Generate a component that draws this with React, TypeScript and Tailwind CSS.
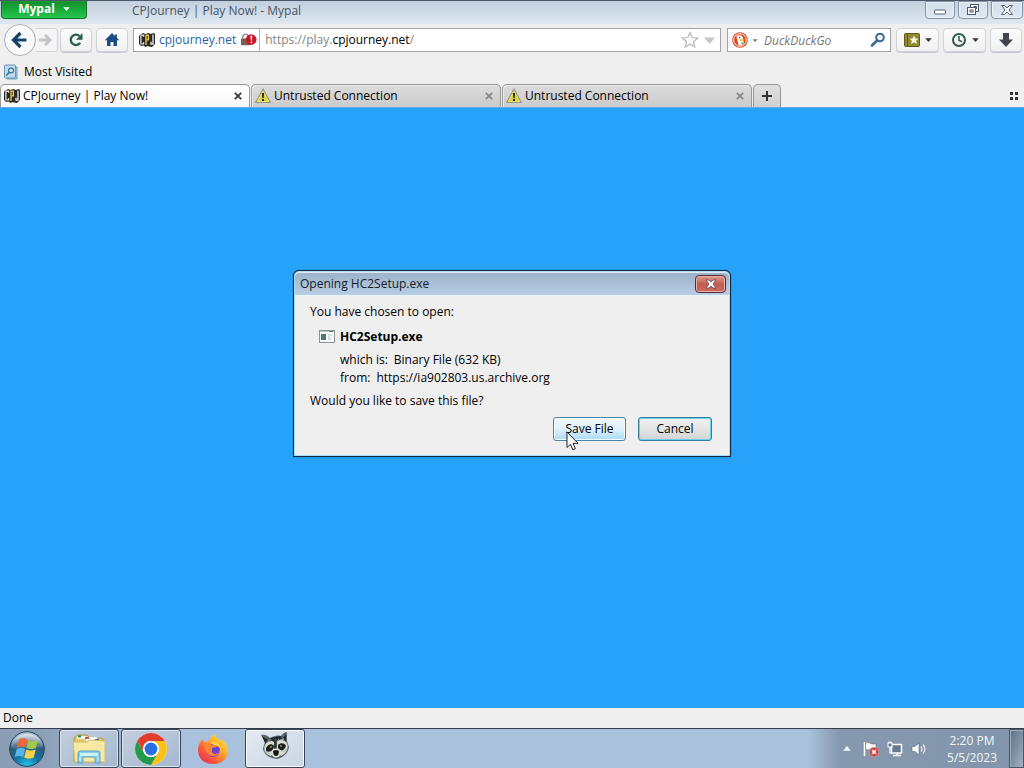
import React, { useState } from "react";

const toolButton =
  "flex h-6 items-center justify-center rounded-sm border border-[#cfd3d8] bg-gradient-to-b from-[#fbfbfb] to-[#f1f1f1] shadow-[0_1px_0_#c4c8cd]";
const windowButton =
  "flex h-full items-center justify-center rounded-b-sm border border-[#8593a6] bg-gradient-to-b from-[#d4e0ec] to-[#dde7f0] shadow-[inset_0_0_0_1px_#e9f0f6]";

function Caret({ className }: { className: string }) {
  return (
    <svg className={className} viewBox="0 0 8 5" aria-hidden="true">
      <path d="M0 .3h8L4 5z" fill="currentColor" />
    </svg>
  );
}

function CpjIcon() {
  return (
    <svg className="h-4 w-4 shrink-0" viewBox="0 0 16 16" aria-hidden="true">
      <path d="M1 2.500 4.500 1l1.500 1 4-1 1.500 1L15 1l1 1v10l-3 3-3-.5L8.500 14l-2 1-2-1.500L2 14 0 12V4z" fill="#2a2925" />
      <path d="M4.600 4.800V3.200H1.900v8.800h2.700v-1.700" fill="none" stroke="#eee" strokeWidth="1.200" />
      <path d="M7 13V3.200h2.400v4.600H7" fill="none" stroke="#f6d04b" strokeWidth="1.300" />
      <path d="M14 2.500v9.700h-2V9.800" fill="none" stroke="#f1f1f1" strokeWidth="1.300" />
    </svg>
  );
}

function WarningIcon() {
  return (
    <svg className="h-4 w-4 shrink-0" viewBox="0 0 16 16" aria-hidden="true">
      <path d="M8 1 15.300 14.500H.7z" fill="#ddd43c" stroke="#96957d" strokeWidth="1.200" strokeLinejoin="round" />
      <path d="M8 3 13.700 13.500H2.300z" fill="none" stroke="#f4efa0" strokeWidth=".6" />
      <path d="M6.900 5h2.200L8.700 10H7.300zM7 11h2v2H7z" fill="#262619" />
    </svg>
  );
}

function SmallCross({ className }: { className: string }) {
  return (
    <svg className={className} viewBox="0 0 8 8" aria-hidden="true">
      <path d="m.8.8 6.400 6.400M7.200.8.8 7.200" stroke="currentColor" strokeWidth="1.700" />
    </svg>
  );
}

function Tab({ title, active }: { title: string; active?: boolean }) {
  return (
    <div
      className={
        active
          ? "flex w-[250px] min-w-0 items-center rounded-t-[5px] border border-b-0 border-[#9a9a9a] bg-gradient-to-b from-white to-[#f8f8f8] pr-[7px] pl-[3px]"
          : "flex w-[250px] min-w-0 items-center rounded-t-[5px] border border-b-0 border-[#979797] bg-gradient-to-b from-[#dcdcdc] to-[#cbcbcb] pr-[7px] pl-[3px] shadow-[inset_1px_1px_0_#ececec]"
      }
    >
      <button role="tab" aria-selected={!!active} className="flex min-w-0 flex-1 items-center gap-[3px] text-left">
        {active ? <CpjIcon /> : <WarningIcon />}
        <span className="truncate">{title}</span>
      </button>
      <button aria-label={"Close " + title}>
        <SmallCross className={active ? "h-2 w-2 text-[#333]" : "h-2 w-2 text-[#878787]"} />
      </button>
    </div>
  );
}

function TitleBar() {
  return (
    <header className="flex h-6 items-start border-t border-[#4b5666] bg-gradient-to-b from-[#c2cfdd] to-[#dfe8f0] pr-px pl-px">
      <button className="flex h-[18px] w-[86px] items-center justify-center gap-2 rounded-b border border-t-0 border-[#0d6a20] bg-gradient-to-b from-[#158c2c] via-[#17ac39] to-[#25c751] pb-[2px] font-bold text-white shadow-[inset_0_0_1px_#8df0a4]">
        Mypal
        <Caret className="h-1 w-[7px]" />
      </button>
      <h1 className="ml-[45px] flex-1 leading-5 text-[#465568]">CPJourney | Play Now! - Mypal</h1>
      <div className="flex h-[18px] gap-[3px]">
        <button aria-label="Minimize" className={windowButton + " w-[30px]"}>
          <svg className="h-4 w-4" viewBox="0 0 16 16"><rect x="2.500" y="8" width="11" height="4" rx="1" fill="#fff" stroke="#56627a" /></svg>
        </button>
        <button aria-label="Restore" className={windowButton + " w-[30px]"}>
          <svg className="h-4 w-4" viewBox="0 0 16 16" fill="#fff" stroke="#4f5b72">
            <rect x="5.500" y="2.500" width="8" height="7" /><rect x="2.500" y="5.500" width="8" height="7" /><rect x="5" y="8" width="3" height="2" />
            <path d="M8.500 4.500h3V7" fill="none" />
          </svg>
        </button>
        <button aria-label="Close window" className={windowButton + " w-8"}>
          <svg className="h-4 w-4" viewBox="0 0 16 16"><path d="M2.500 3.500h3L8 6l2.500-2.500h3L10 8l3.500 4.500h-3L8 10l-2.500 2.500h-3L6 8z" fill="#fff" stroke="#56627a" /></svg>
        </button>
      </div>
    </header>
  );
}

function Toolbar() {
  const [address, setAddress] = useState("https://play.cpjourney.net/");
  return (
    <nav className="flex h-8 items-center pr-[2px] pl-1">
      <button aria-label="Back" className="flex h-8 w-8 shrink-0 items-center justify-center rounded-full border border-[#a9adb2] bg-[#fafafa]">
        <svg className="h-5 w-5" viewBox="0 0 20 20"><path d="M10.500 3 3.500 10l7 7M4 10h12.500" fill="none" stroke="#17446f" strokeWidth="3.200" /></svg>
      </button>
      <button aria-label="Forward" disabled className="flex h-6 w-[22px] items-center justify-center rounded-r-sm border border-l-0 border-[#cfd3d8] bg-[#f5f5f5] pr-1">
        <svg className="h-4 w-4" viewBox="0 0 16 16"><path d="m8 3 5 5-5 5M2 8h10" fill="none" stroke="#bfc5ca" strokeWidth="3" /></svg>
      </button>
      <button aria-label="Reload" className={toolButton + " ml-[2px] w-8"}>
        <svg className="h-4 w-4" viewBox="0 0 16 16"><path d="M12.200 10.800A5.200 5.200 0 1 1 11.500 4" fill="none" stroke="#285f4a" strokeWidth="2.300" /><path d="M14.500 1v6.700H8z" fill="#285f4a" /></svg>
      </button>
      <button aria-label="Home" className={toolButton + " ml-1 w-8"}>
        <svg className="h-4 w-4" viewBox="0 0 16 16"><path d="M8 1 .8 8.200H3V14h3.500v-4h3v4H13V8.200h2.200L13 6V2.500h-2V4z" fill="#1e4d86" /></svg>
      </button>
      <div className="ml-[5px] flex h-6 min-w-0 flex-1 items-center border border-[#a3a3a3] bg-white">
        <button className="flex h-full items-center gap-1 border-r border-[#b9b9b9] pr-[2px] pl-[5px] text-[#1f5fa8]">
          <CpjIcon />
          cpjourney.net
          <svg className="h-4 w-[17px]" viewBox="0 0 18 16" aria-hidden="true">
            <path d="M3 7V5a3 3 0 0 1 6 0v2" fill="none" stroke="#999" strokeWidth="1.600" /><rect x="1" y="6.500" width="10" height="7" rx="1" fill="#75605a" />
            <circle cx="11.800" cy="7.500" r="5.700" fill="#c9172a" /><path d="M11 3.500h2L12.500 8.500h-1z" fill="#fff" /><circle cx="12" cy="10.500" r="1" fill="#fff" />
          </svg>
        </button>
        <div className="relative h-full min-w-0 flex-1">
          <input aria-label="Address" value={address} onChange={(e) => setAddress(e.target.value)} className="h-full w-full px-[5px] text-transparent caret-black outline-none" />
          <div aria-hidden="true" className="pointer-events-none absolute inset-0 flex items-center overflow-hidden px-[5px] whitespace-pre">
            {address === "https://play.cpjourney.net/" ? (
              <><span className="text-[#858585]">https://play.</span><span>cpjourney.net</span><span className="text-[#858585]">/</span></>
            ) : address}
          </div>
        </div>
        <button aria-label="Bookmark this page">
          <svg className="h-[18px] w-[18px]" viewBox="0 0 18 18"><path d="m9 1.500 2.200 5 5.500.5-4.200 3.700 1.300 5.400L9 13.200l-4.800 2.900 1.300-5.400L1.300 7l5.500-.5z" fill="#fcfcfc" stroke="#b8b8b8" strokeWidth="1.200" /></svg>
        </button>
        <button aria-label="Show history" className="mr-[5px] ml-[5px] text-[#c6c6c6]"><Caret className="h-[7px] w-[11px]" /></button>
      </div>
      <form className="ml-[6px] flex h-6 w-[164px] items-center border border-[#a3a3a3] bg-white" onSubmit={(e) => e.preventDefault()}>
        <button type="button" aria-label="Search engine" className="flex items-center gap-1 pl-[4px] text-[#737373]">
          <svg className="h-4 w-4" viewBox="0 0 16 16"><circle cx="8" cy="8" r="7.800" fill="#d8431b" /><circle cx="8" cy="8" r="6.300" fill="none" stroke="#fff" /><path d="M4.500 4C8 2 11.500 4 11 7l1 4.500L9 13.500 6.500 13 5 7z" fill="#fff" /><path d="M8 7.500c2.500-.8 4-.6 4.500.2-.6 1.300-2.500 1.600-4.500 1.300z" fill="#f9c426" /><path d="m8.500 11 3-1v2.500z" fill="#65a942" /><circle cx="7.600" cy="5.500" r=".8" fill="#444" /></svg>
          <Caret className="h-[3px] w-[6px]" />
        </button>
        <input aria-label="Search" placeholder="DuckDuckGo" className="ml-[6px] h-full min-w-0 flex-1 italic outline-none placeholder:text-[#777]" />
        <button aria-label="Search the web" className="pr-1">
          <svg className="h-4 w-4" viewBox="0 0 16 16"><circle cx="10" cy="5.500" r="3.800" fill="#f1f7fb" stroke="#376a99" strokeWidth="2" /><path d="m7 8.500-5 5" stroke="#376a99" strokeWidth="2.600" strokeLinecap="round" /></svg>
        </button>
      </form>
      <button aria-label="Bookmarks" className={toolButton + " ml-[5px] w-[43px] gap-[5px]"}>
        <svg className="h-4 w-4" viewBox="0 0 16 16"><rect x=".5" y="1.500" width="15" height="13" rx="1" fill="#8d8b35" stroke="#5e5b19" /><path d="M3.500 1v14" stroke="#5e5b19" /><path d="m10 3.500 1.300 3 3.200.3-2.400 2 .8 3.200-2.900-1.700L7.100 12l.8-3.200-2.400-2 3.200-.3z" fill="#fff8df" /></svg>
        <Caret className="h-1 w-[7px] text-[#333]" />
      </button>
      <button aria-label="History" className={toolButton + " ml-1 w-[43px] gap-[5px]"}>
        <svg className="h-4 w-4" viewBox="0 0 16 16" fill="none" stroke="#315d50"><circle cx="8" cy="8" r="6" strokeWidth="2" /><path d="M8 4v4.500l3 1" strokeWidth="1.500" /></svg>
        <Caret className="h-1 w-[7px] text-[#333]" />
      </button>
      <button aria-label="Downloads" className={toolButton + " ml-1 w-8"}>
        <svg className="h-4 w-4" viewBox="0 0 16 16"><path d="M5 1h6v6.500h4L8 15 1 7.500h4z" fill="#41454c" /></svg>
      </button>
    </nav>
  );
}

function Dialog() {
  return (
    <section role="dialog" aria-labelledby="dialog-title" className="flex h-[187px] w-[438px] flex-col rounded-t-[6px] border border-[#10283b] bg-[#a9def7] p-px shadow-[0_0_1px_#10283b]">
      <div className="flex h-[23px] shrink-0 items-center rounded-t-[5px] border-t border-[#dceaf6] bg-gradient-to-b from-[#9db3ca] to-[#b9cee5] pr-[3px] pl-[5px]">
        <h2 id="dialog-title" className="flex-1 text-[#14202c]">Opening HC2Setup.exe</h2>
        <button aria-label="Close" className="flex h-[18px] w-[31px] items-center justify-center rounded-sm border border-[#582b32] bg-gradient-to-b from-[#dc9c91] via-[#c45c4f] via-50% to-[#c86c5c] shadow-[inset_0_0_0_1px_#e7b5ad]">
          <svg className="h-3 w-3" viewBox="0 0 12 12"><path d="M1 2h3l2 2 2-2h3L8 6l3 4H8L6 8l-2 2H1l3-4z" fill="#fff" stroke="#5c4146" strokeWidth=".8" /></svg>
        </button>
      </div>
      <div className="flex flex-1 flex-col border border-[#e4f5fc] bg-[#efefef] pt-[7px] pr-4 pl-[14px] leading-[18px]">
        <p>You have chosen to open:</p>
        <div className="mt-[7px] flex items-center gap-[5px] pl-[9px] font-bold">
          <svg className="h-4 w-4" viewBox="0 0 16 16" aria-hidden="true"><rect x=".5" y="1.500" width="15" height="12" fill="#f8faf9" stroke="#899294" /><path d="M1 2.500h14" stroke="#b4c8cf" /><rect x="2" y="5" width="5" height="6" fill="#47796c" /><path d="M9 6h4M9 8h2M9 10h3" stroke="#b8c2c1" /><path d="M10 2.500h4" stroke="#5d7880" /></svg>
          HC2Setup.exe
        </div>
        <dl className="mt-[5px] pl-[30px]">
          <div className="flex gap-[6px]"><dt>which is:</dt><dd>Binary File (632 KB)</dd></div>
          <div className="flex gap-[6px]"><dt>from:</dt><dd>https://ia902803.us.archive.org</dd></div>
        </dl>
        <p className="mt-[5px]">Would you like to save this file?</p>
        <div className="mt-[7px] flex justify-end gap-3">
          <div className="relative">
            <button className="h-6 w-[73px] rounded-[3px] border border-[#4d83a9] bg-gradient-to-b from-[#eef8fd] via-[#dcf1fc] via-50% to-[#abdbf4] leading-5 shadow-[inset_0_0_0_1px_#f0faff]">Save File</button>
            <svg className="pointer-events-none absolute top-[14px] left-[13px] h-5 w-[13px]" viewBox="0 0 13 20" aria-hidden="true"><path d="M1 1v15.500l3.500-3.200 2.300 5.500 2.500-1.100L7 12.300h5z" fill="#fff" stroke="#20252c" strokeLinejoin="round" /></svg>
          </div>
          <button className="h-6 w-[74px] rounded-[3px] border border-[#347f9c] bg-gradient-to-b from-[#f3f3f3] via-[#e5e5e5] via-50% to-[#d1d3d4] leading-5 shadow-[inset_0_0_0_1px_#6cd0e8]">Cancel</button>
        </div>
      </div>
    </section>
  );
}

function StartOrb() {
  return (
    <svg className="h-9 w-9" viewBox="0 0 36 36" aria-hidden="true">
      <defs>
        <radialGradient id="orb" cx=".5" cy="1" r=".95"><stop stopColor="#23c9ec" /><stop offset=".4" stopColor="#16709f" /><stop offset=".75" stopColor="#315775" /><stop offset="1" stopColor="#aac1d1" /></radialGradient>
        <linearGradient id="gloss" x2="0" y2="1"><stop stopColor="#fff" stopOpacity=".65" /><stop offset="1" stopColor="#fff" stopOpacity=".08" /></linearGradient>
      </defs>
      <circle cx="18" cy="18" r="17.300" fill="url(#orb)" stroke="#24435a" />
      <path d="M2 17C3-2 33-2 34 17c-8-3-22 3-32 0" fill="url(#gloss)" />
      <path d="M10 8.500c3-2 5.500-1.500 8.500 0l-2 8c-3-1.500-5.500-1.500-8.500 0z" fill="#ee6738" />
      <path d="M19.500 9c3 1.600 6.500 1.600 9.500 0l-2 8c-3 1.500-6.500 1.500-9.500 0z" fill="#a2cb45" />
      <path d="M7.700 18c3-1.500 5.500-1.500 8.500 0l-2 8c-3-1.500-5.500-1.500-8.500 0z" fill="#5cb5e7" />
      <path d="M17.200 18.500c3 1.500 6.500 1.500 9.500 0l-2 8c-3 1.500-6.500 1.500-9.500 0z" fill="#ffd24a" />
    </svg>
  );
}

function FolderIcon() {
  return (
    <svg className="h-8 w-9" viewBox="0 0 36 32" aria-hidden="true">
      <path d="M3 5 7 2h9l3 3h12l2 3v21H3z" fill="#e7c765" stroke="#ae9957" />
      <path d="M6 3h9v3H6zM15 4h11v4H15z" fill="#fff" /><path d="M7 3.500h3M14 5h4M24 8h4" stroke="#2a8c4b" strokeWidth="2" /><path d="M14 5h4" stroke="#bd5849" strokeWidth="2" /><path d="M24 7h4" stroke="#3a78b8" strokeWidth="2" />
      <path d="M2 9h14l3-2 15 1v21H4z" fill="#f7e8a2" stroke="#d5bc6b" />
      <path d="M7 20q0-2 2-2h18q2 0 2 2v10h-5v-6H12v6H7z" fill="#8acbe8" stroke="#58a4ce" /><path d="M9 20h18v3H9z" fill="#cef1fb" /><path d="M9 24v4M27 24v4" stroke="#d8f7ff" />
    </svg>
  );
}

function ChromeIcon() {
  return (
    <svg className="h-8 w-8" viewBox="0 0 32 32" aria-hidden="true">
      <circle cx="16" cy="16" r="16" fill="#fff" />
      <path d="M2.144 8A16 16 0 0 1 29.856 8H16a8 8 0 0 0-6.928 12z" fill="#e33b2e" />
      <path d="M29.856 8A16 16 0 0 1 16 32l6.928-12A8 8 0 0 0 16 8z" fill="#fbc116" />
      <path d="M16 32A16 16 0 0 1 2.144 8l6.928 12a8 8 0 0 0 13.856 0z" fill="#229a49" />
      <circle cx="16" cy="16" r="8" fill="#fff" /><circle cx="16" cy="16" r="6.400" fill="#286fe0" />
    </svg>
  );
}

function FirefoxIcon() {
  return (
    <svg className="h-8 w-8" viewBox="0 0 32 32" aria-hidden="true">
      <defs><linearGradient id="fire" x1="1" x2=".1" y2="1"><stop stopColor="#fff14b" /><stop offset=".4" stopColor="#ffad29" /><stop offset=".68" stopColor="#ff6038" /><stop offset="1" stopColor="#e92459" /></linearGradient></defs>
      <path d="M18 1c1 4 4 5 6 7l1-2c4 4 6 8 6 13C30 27 24 31 16 31S1 26 1 17c0-5 2-8 5-11l1 4 4-1c1-3 4-6 7-8" fill="url(#fire)" />
      <circle cx="16" cy="17" r="7" fill="#7047d1" />
      <path d="M6 9c4-1 7 0 9 3h5c0 3-3 3-5 4 0 3 5 4 8 1-1 6-8 8-12 4-4-3-3-7-5-12" fill="#ff8630" />
      <path d="M13 10c6-3 10 1 11 7-1-3-5-5-7-5z" fill="#ffd13b" />
      <path d="M15 15c4-2 8 0 7 4-2 3-6 2-7 0z" fill="#6a43cf" />
    </svg>
  );
}

function RaccoonIcon() {
  return (
    <svg className="h-8 w-8" viewBox="0 0 32 32" aria-hidden="true">
      <path d="M2 4c4-1 7 1 9 3 4-2 7-3 11-2 1-2 4-4 6-4v9l2 6c-1 6-5 10-12 12C10 27 4 23 4 17l2-6z" fill="#59666a" />
      <path d="m3 5 6 4-3 3zM27 3l-3 4 3 4zM11 7l11-2 1 4-9 2z" fill="#20292e" />
      <path d="M6 14c3-4 6-5 9-3l1 8-4 6c-6-2-8-6-6-11M28 12c-3-3-6-4-10-2v9l4 6c5-2 8-7 6-13" fill="#d8ddd0" />
      <path d="M7 17c2-4 6-5 8-2 0 4-4 7-8 5zM19 14c3-3 7-2 8 1-2 5-5 6-8 2z" fill="#1b2022" />
      <path d="m15 7 3 1-1 13-2-1z" fill="#353c3e" /><ellipse cx="17" cy="22" rx="4.500" ry="4.500" fill="#dfe3dc" />
      <path d="M14 20q3-2 6 0 0 5-3 5t-3-5" fill="#171a1b" />
      <circle cx="12" cy="16" r=".9" fill="#ba9445" /><circle cx="22" cy="15" r=".9" fill="#ba9445" />
      <path d="m9 10 3 1M20 8l-2 3M25 8l-4 1M7 21l4 2M28 18l-4 3" stroke="#a6b0ae" />
    </svg>
  );
}

const taskButton =
  "flex w-[60px] items-center justify-center rounded-[3px] border border-[#39475b] bg-gradient-to-br from-[#c3cfdd] to-[#a5b8d0] shadow-[inset_0_0_0_1px_#dce5ef]";

function Taskbar() {
  return (
    <footer className="flex h-10 items-stretch border-t border-[#333d4c] bg-[linear-gradient(to_right,#8b9eb6_4%,#a9c1dc_14%,#a9c1dc_79%,#8598ae_82%,#8295ab)]">
      <button aria-label="Start" className="mr-[5px] flex w-[54px] items-center justify-center"><StartOrb /></button>
      <div className="flex gap-[2px]">
        <button aria-label="File Explorer" className={taskButton}><FolderIcon /></button>
        <button aria-label="Chrome" className={taskButton}><ChromeIcon /></button>
        <button aria-label="Firefox" className="flex w-[60px] items-center justify-center"><FirefoxIcon /></button>
        <button aria-label="Mypal" className="flex w-[60px] items-start justify-center rounded-[3px] border border-[#35445a] bg-gradient-to-br from-[#e4eaf1] to-[#c8d5e4] pt-px shadow-[inset_0_0_0_1px_white]"><RaccoonIcon /></button>
      </div>
      <div className="ml-auto flex items-center">
        <button aria-label="Show hidden icons" className="mr-[6px] flex h-6 w-5 items-center justify-center text-[#edf4fa]"><Caret className="h-[5px] w-2 rotate-180" /></button>
        <button aria-label="Action center" className="mr-2">
          <svg className="h-4 w-4" viewBox="0 0 16 16"><path d="M1.500 1v14" stroke="#fff" strokeWidth="1.600" /><path d="M2.500 2c3-1 4 0 5 .5 2 .8 4 .5 5.500.5v6c-4 1-6-1-10.500 0z" fill="#f8fbfb" stroke="#647181" strokeWidth=".6" /><circle cx="11" cy="11" r="4.800" fill="#ca3e3e" stroke="#e9b0ae" strokeWidth=".6" /><path d="m9 9 4 4m0-4-4 4" stroke="#fff" strokeWidth="1.600" /></svg>
        </button>
        <button aria-label="Network" className="mr-2">
          <svg className="h-4 w-4" viewBox="0 0 16 16"><rect x="4.500" y="3.500" width="10" height="8.500" fill="#647990" stroke="#fff" strokeWidth="1.500" /><path d="M6 14.500h8M10 12v2" stroke="#fff" strokeWidth="1.500" /><rect x="1" y="2" width="4" height="4" fill="#647990" stroke="#fff" /><path d="M2 .5V2m2-1.500V2M3 6v6h2" fill="none" stroke="#fff" strokeWidth="1.200" /></svg>
        </button>
        <button aria-label="Volume" className="mr-5">
          <svg className="h-4 w-4" viewBox="0 0 16 16"><path d="M1 5.500h3L8 2v12l-4-3.500H1z" fill="#f6f9fb" stroke="#4e5f72" strokeWidth=".5" /><path d="M10 5.500q2 2.500 0 5M12 3.500q4 4.500 0 9" fill="none" stroke="#edf3f8" strokeWidth="1.200" /></svg>
        </button>
        <time dateTime="2023-05-05T14:20" className="mr-3 flex flex-col items-center leading-[17px] text-[#f2f6fa]"><span>2:20 PM</span><span>5/5/2023</span></time>
        <button aria-label="Show desktop" className="h-full w-[15px] border border-[#47566a] bg-gradient-to-br from-[#5f7086] to-[#a2b0c1] shadow-[inset_1px_1px_0_#9cabbc]" />
      </div>
    </footer>
  );
}

export default function App() {
  return (
    <div className="flex min-h-screen flex-col bg-[#efefef] font-['Open_Sans','Noto_Sans',sans-serif] text-[12px] text-black">
      <TitleBar />
      <Toolbar />
      <div className="flex h-7 items-center pt-[3px] pl-[3px]">
        <button className="flex items-center gap-[5px]">
          <svg className="h-4 w-4" viewBox="0 0 16 16" aria-hidden="true"><path d="M4 3h10v12H4z" fill="#a9cce3" stroke="#6d9bbb" /><rect x="1.500" y="1" width="11" height="13" rx="1" fill="#bfdbeb" stroke="#6696b8" /><circle cx="8" cy="6.500" r="2.400" fill="#dceef7" stroke="#356d99" strokeWidth="1.200" /><path d="m6.200 8.500-3 3" stroke="#356d99" strokeWidth="1.600" /></svg>
          Most Visited
        </button>
      </div>
      <div role="tablist" className="flex h-6 gap-px border-b border-[#6aa9d8]">
        <Tab title="CPJourney | Play Now!" active />
        <Tab title="Untrusted Connection" />
        <Tab title="Untrusted Connection" />
        <button aria-label="New tab" className="flex w-7 items-center justify-center rounded-t-[5px] border border-b-0 border-[#979797] bg-gradient-to-b from-[#e0e0e0] to-[#d0d0d0]">
          <svg className="h-[10px] w-[10px]" viewBox="0 0 10 10"><path d="M5 0v10M0 5h10" stroke="#333" strokeWidth="2" /></svg>
        </button>
        <button aria-label="Tab groups" className="mr-[5px] ml-auto">
          <svg className="h-[10px] w-[10px]" viewBox="0 0 10 10"><path d="M1 1h3v3H1zM6 1h3v3H6zM1 6h3v3H1zM6 6h3v3H6z" fill="#333" /></svg>
        </button>
      </div>
      <main className="flex flex-1 items-start justify-center bg-[#27a2fa] pt-[162px]">
        <Dialog />
      </main>
      <div role="status" className="h-5 px-[3px] leading-5">Done</div>
      <Taskbar />
    </div>
  );
}
